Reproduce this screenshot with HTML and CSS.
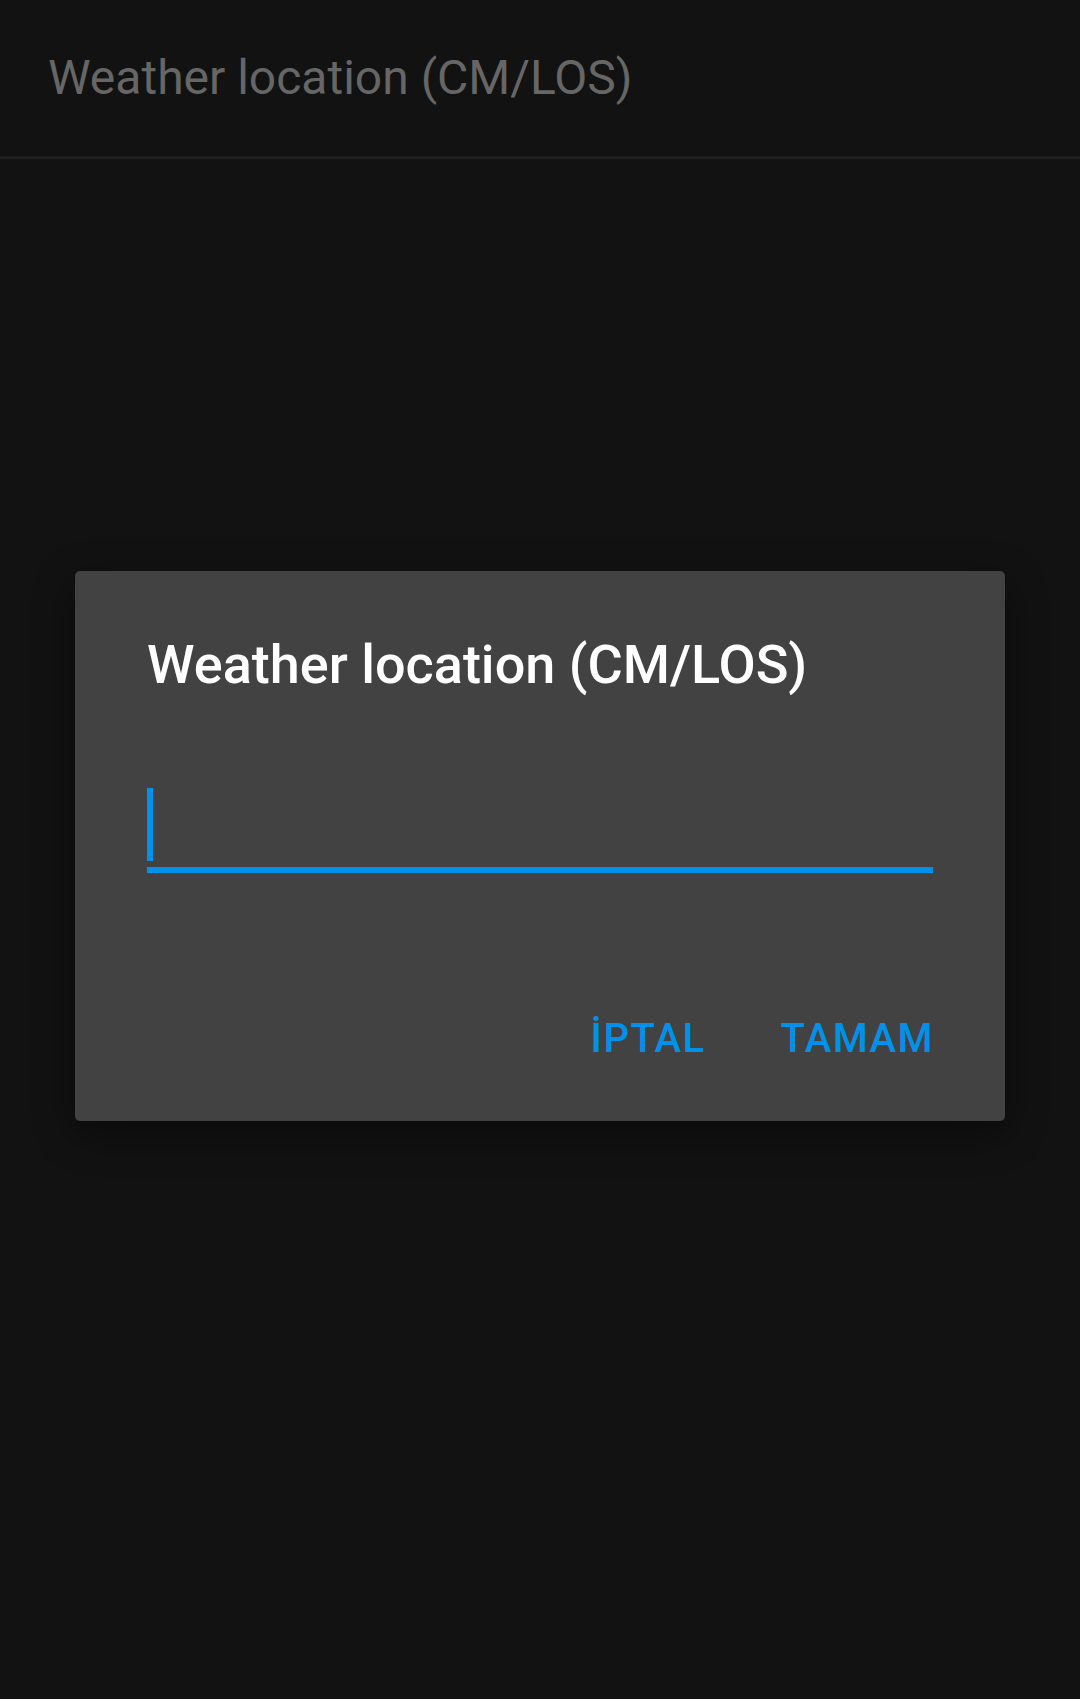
FILE: index.html
```html
<!DOCTYPE html>
<html lang="tr">
<head>
<meta charset="utf-8">
<title>Weather location (CM/LOS)</title>
<link rel="stylesheet" href="styles.css">
</head>
<body>
<header class="appbar">
  <h1 class="appbar-title">Weather location (CM/LOS)</h1>
</header>
<main class="stage">
  <section class="dialog">
    <h2 class="dialog-title">Weather location (CM/LOS)</h2>
    <div class="field"><span class="caret"></span></div>
    <div class="actions">
      <button class="btn">İPTAL</button>
      <button class="btn">TAMAM</button>
    </div>
  </section>
</main>
</body>
</html>
```
FILE: styles.css
```css
html, body {
  margin: 0;
  padding: 0;
}
body {
  background: #121212;
  width: 1080px;
  height: 1699px;
  font-family: Roboto, "Noto Sans", sans-serif;
  overflow: hidden;
}
.appbar {
  height: 159px;
  box-sizing: border-box;
  padding: 54px 0 0 48px;
  border-bottom: 3px solid #1e1e1e;
}
.appbar-title {
  margin: 0;
  font-size: 48px;
  font-weight: 400;
  line-height: 1;
  color: #666666;
}
.stage {
  display: flex;
  justify-content: center;
  padding-top: 412px;
}
.dialog {
  width: 930px;
  height: 550px;
  box-sizing: border-box;
  background: #424242;
  border-radius: 5px;
  box-shadow: 0 12px 40px rgba(0, 0, 0, 0.45);
  padding: 0 72px;
  display: flex;
  flex-direction: column;
}
.dialog-title {
  margin: 67px 0 0 0;
  font-size: 54px;
  font-weight: 500;
  line-height: 1;
  color: #ffffff;
}
.field {
  margin-top: 96px;
  padding-bottom: 6px;
  border-bottom: 6px solid #0091ea;
}
.caret {
  display: block;
  width: 6px;
  height: 73px;
  background: #0091ea;
}
.actions {
  margin-top: 146px;
  margin-right: -1px;
  display: flex;
  justify-content: flex-end;
  gap: 75px;
}
.btn {
  background: none;
  border: 0;
  padding: 0;
  margin: 0;
  font-family: Roboto, "Noto Sans", sans-serif;
  font-size: 40px;
  font-weight: 500;
  line-height: 1;
  letter-spacing: 1.5px;
  color: #0091ea;
}
```
